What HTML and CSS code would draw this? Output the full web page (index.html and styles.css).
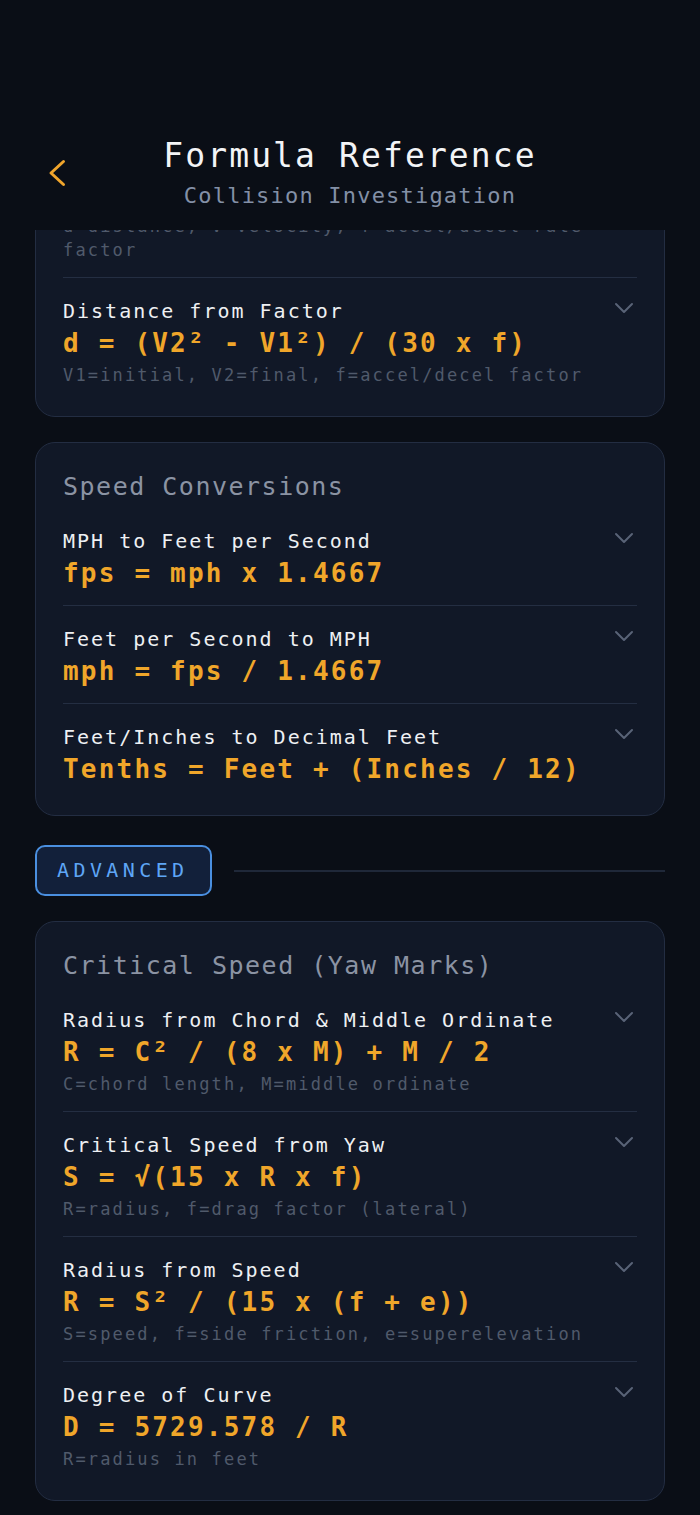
FILE: index.html
```html
<!DOCTYPE html>
<html lang="en">
<head>
<meta charset="utf-8">
<title>Formula Reference</title>
<link rel="stylesheet" href="styles.css">
</head>
<body>
<div class="app">
  <header class="topbar">
    <div class="back-cell">
      <button class="back" aria-label="Back">
        <svg width="18" height="28" viewBox="0 0 18 28"><polyline points="15.5,2.5 3,14 15.5,25.5" fill="none" stroke="#f0a52c" stroke-width="3" stroke-linecap="round" stroke-linejoin="round"/></svg>
      </button>
    </div>
    <div class="titles">
      <h1 class="title">Formula Reference</h1>
      <p class="subtitle">Collision Investigation</p>
    </div>
    <div></div>
  </header>

  <main class="scroll">
    <div class="content">

      <section class="card card-first">
        <div class="row">
          <div class="row-text">
            <div class="desc">d=distance, V=velocity, f=accel/decel rate factor</div>
          </div>
        </div>
        <div class="row">
          <div class="row-text">
            <div class="row-title">Distance from Factor</div>
            <div class="formula">d = (V2² - V1²) / (30 x f)</div>
            <div class="desc">V1=initial, V2=final, f=accel/decel factor</div>
          </div>
          <svg class="chev" width="20" height="12" viewBox="0 0 20 12"><polyline points="2,2 10,10 18,2"/></svg>
        </div>
      </section>

      <section class="card">
        <h2 class="card-title">Speed Conversions</h2>
        <div class="row">
          <div class="row-text">
            <div class="row-title">MPH to Feet per Second</div>
            <div class="formula">fps = mph x 1.4667</div>
          </div>
          <svg class="chev" width="20" height="12" viewBox="0 0 20 12"><polyline points="2,2 10,10 18,2"/></svg>
        </div>
        <div class="row">
          <div class="row-text">
            <div class="row-title">Feet per Second to MPH</div>
            <div class="formula">mph = fps / 1.4667</div>
          </div>
          <svg class="chev" width="20" height="12" viewBox="0 0 20 12"><polyline points="2,2 10,10 18,2"/></svg>
        </div>
        <div class="row">
          <div class="row-text">
            <div class="row-title">Feet/Inches to Decimal Feet</div>
            <div class="formula">Tenths = Feet + (Inches / 12)</div>
          </div>
          <svg class="chev" width="20" height="12" viewBox="0 0 20 12"><polyline points="2,2 10,10 18,2"/></svg>
        </div>
      </section>

      <div class="divider">
        <span class="badge">ADVANCED</span>
        <span class="divider-line"></span>
      </div>

      <section class="card">
        <h2 class="card-title">Critical Speed (Yaw Marks)</h2>
        <div class="row">
          <div class="row-text">
            <div class="row-title">Radius from Chord &amp; Middle Ordinate</div>
            <div class="formula">R = C² / (8 x M) + M / 2</div>
            <div class="desc">C=chord length, M=middle ordinate</div>
          </div>
          <svg class="chev" width="20" height="12" viewBox="0 0 20 12"><polyline points="2,2 10,10 18,2"/></svg>
        </div>
        <div class="row">
          <div class="row-text">
            <div class="row-title">Critical Speed from Yaw</div>
            <div class="formula">S = √(15 x R x f)</div>
            <div class="desc">R=radius, f=drag factor (lateral)</div>
          </div>
          <svg class="chev" width="20" height="12" viewBox="0 0 20 12"><polyline points="2,2 10,10 18,2"/></svg>
        </div>
        <div class="row">
          <div class="row-text">
            <div class="row-title">Radius from Speed</div>
            <div class="formula">R = S² / (15 x (f + e))</div>
            <div class="desc">S=speed, f=side friction, e=superelevation</div>
          </div>
          <svg class="chev" width="20" height="12" viewBox="0 0 20 12"><polyline points="2,2 10,10 18,2"/></svg>
        </div>
        <div class="row">
          <div class="row-text">
            <div class="row-title">Degree of Curve</div>
            <div class="formula">D = 5729.578 / R</div>
            <div class="desc">R=radius in feet</div>
          </div>
          <svg class="chev" width="20" height="12" viewBox="0 0 20 12"><polyline points="2,2 10,10 18,2"/></svg>
        </div>
      </section>

    </div>
  </main>
</div>
</body>
</html>
```

FILE: styles.css
```css
* {
  box-sizing: border-box;
}

html, body {
  margin: 0;
  padding: 0;
  background: #0a0e16;
  height: 100%;
  overflow: hidden;
}

body {
  font-family: "DejaVu Sans Mono", "Liberation Mono", monospace;
  color: #eef0f3;
}

.app {
  height: 100vh;
  display: flex;
  flex-direction: column;
}

/* Header */
.topbar {
  flex: none;
  height: 230px;
  padding: 136px 35px 20px;
  display: grid;
  grid-template-columns: 1fr auto 1fr;
  align-items: center;
  background: #0a0e16;
}

.back-cell {
  display: flex;
  align-items: center;
}

.back {
  background: none;
  border: 0;
  padding: 0 0 0 13px;
  margin: 0;
  display: flex;
  cursor: pointer;
}

.titles {
  text-align: center;
}

.title {
  margin: 0;
  font-size: 33px;
  line-height: 40px;
  font-weight: normal;
  letter-spacing: 2.1px;
  color: #f3f4f6;
}

.subtitle {
  margin: 6px 0 0;
  font-size: 22px;
  line-height: 28px;
  letter-spacing: 1.2px;
  color: #8390a6;
}

/* Scroll area */
.scroll {
  flex: 1;
  overflow: hidden;
}

.content {
  padding: 0 35px;
  display: flex;
  flex-direction: column;
}

.card {
  background: #111827;
  border: 1px solid #232d42;
  border-radius: 20px;
  padding: 28px 27px 14px;
  margin-top: 25px;
}

.card-first {
  margin-top: -68px;
}

.card-title {
  margin: 0 0 4px;
  font-size: 25px;
  line-height: 32px;
  font-weight: normal;
  letter-spacing: 1.5px;
  color: #8b93a3;
}

.row {
  display: flex;
  align-items: flex-start;
  border-top: 1px solid #242e42;
  padding: 19px 0 15px;
}

.row:first-of-type {
  border-top-color: transparent;
}

.row-text {
  flex: 1;
  min-width: 0;
  padding-right: 35px;
}

.row-title {
  font-size: 20px;
  line-height: 28px;
  letter-spacing: 2px;
  color: #eef0f3;
}

.formula {
  margin-top: 1px;
  font-size: 26px;
  line-height: 34px;
  font-weight: bold;
  letter-spacing: 2.2px;
  color: #f0a62a;
}

.desc {
  margin-top: 3px;
  font-size: 17px;
  line-height: 24px;
  letter-spacing: 2.15px;
  color: #505a6b;
}

.chev {
  flex: none;
  margin: 5px 3px 0 -32px;
  fill: none;
  stroke: #596377;
  stroke-width: 2;
  stroke-linecap: round;
  stroke-linejoin: round;
}

/* Divider */
.divider {
  margin-top: 29px;
  display: flex;
  align-items: center;
  gap: 22px;
}

.badge {
  flex: none;
  border: 2px solid #4a8fe0;
  border-radius: 10px;
  background: #12203a;
  padding: 12px 21px 12px 20px;
  font-size: 20px;
  line-height: 23px;
  letter-spacing: 4.4px;
  color: #5ea6f6;
}

.divider-line {
  flex: 1;
  height: 2px;
  background: #1f2839;
}

.divider + .card {
  margin-top: 25px;
}
```
